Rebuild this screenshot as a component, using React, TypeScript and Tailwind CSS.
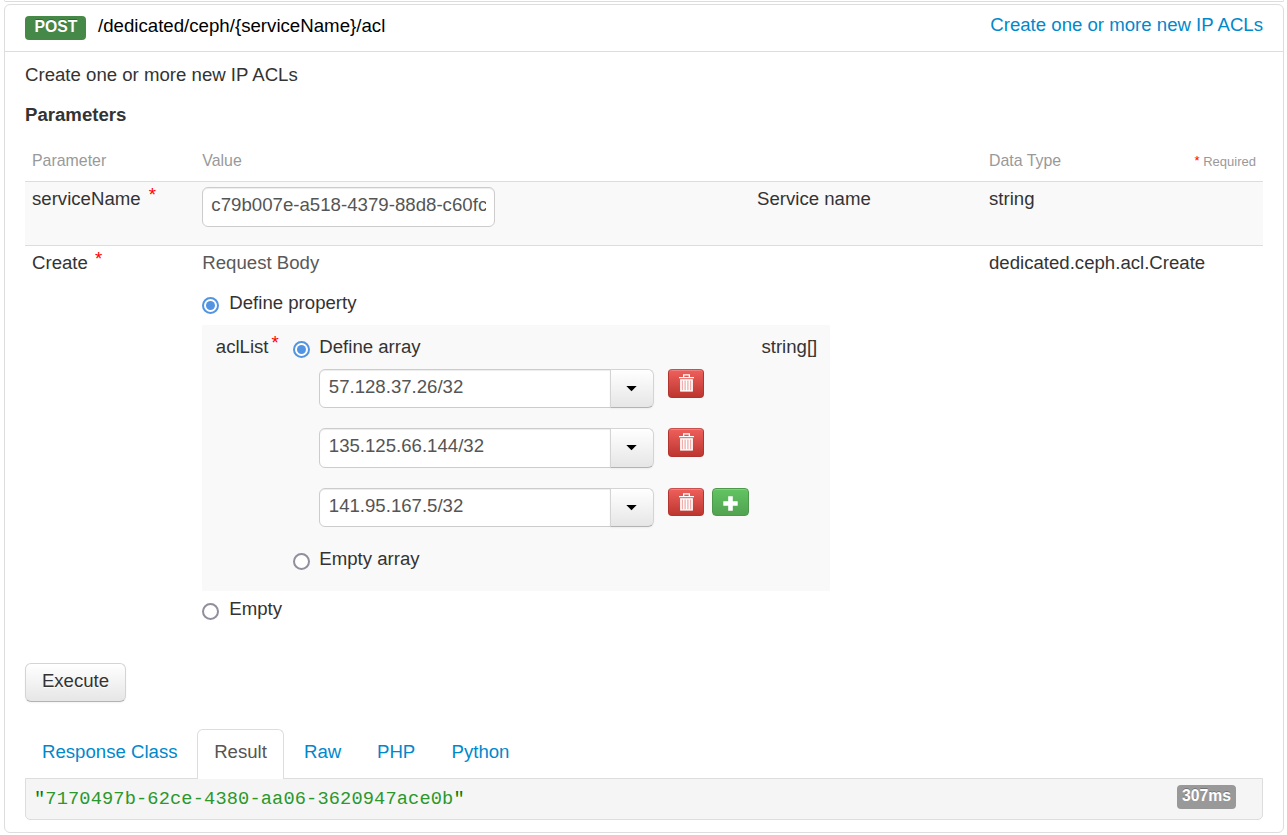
import React from "react";

function Star({ className = "" }: { className?: string }) {
  return <span className={"text-[#f00] " + className}>*</span>;
}

function Radio({ on = false }: { on?: boolean }) {
  return on ? (
    <span className="flex size-[17px] shrink-0 items-center justify-center rounded-full border-2 border-[#5294e2] bg-white">
      <span className="size-[9px] rounded-full bg-[#5294e2]" />
    </span>
  ) : (
    <span className="block size-[17px] shrink-0 rounded-full border-2 border-[#8f8f9d] bg-white" />
  );
}

function Option({ label, on, gap }: { label: string; on?: boolean; gap: string }) {
  return (
    <div className={"flex h-[26px] " + gap}>
      <div className="pt-[7px]">
        <Radio on={on} />
      </div>
      <span>{label}</span>
    </div>
  );
}

function TrashIcon() {
  return (
    <svg width="15" height="18" viewBox="0 0 15 18" className="block">
      <path d="M0 3h15v1.2H0z M4 3V0.2h7V3H9.7V1.5H5.3V3z" fill="#fff" />
      <path d="M1.1 5.2h12.8v12.4H1.1z" fill="#fff" />
      <path d="M3.4 6.4v9.8M6.1 6.4v9.8M8.9 6.4v9.8M11.6 6.4v9.8" stroke="#efaeab" strokeWidth="1.3" />
    </svg>
  );
}

function PlusIcon() {
  return (
    <svg width="15" height="15" viewBox="0 0 15 15" className="block">
      <path d="M5.2 0.3h4.6v4.9h4.9v4.6H9.8v4.9H5.2V9.8H0.3V5.2h4.9z" fill="#fff" />
    </svg>
  );
}

type AclRowProps = { value: string; add?: boolean; height: string; field?: string; action?: string };

function AclRow({ value, add, height, field = "h-[39px]", action = "h-[29px]" }: AclRowProps) {
  return (
    <div className={"flex items-start " + height}>
      <div className={"flex w-[335px] " + field}>
        <div className="h-full w-[292px] rounded-l-[6px] border border-[#ccc] bg-white pl-[8.5px] pt-[4px] text-[#555] shadow-[inset_0_1px_1px_rgba(0,0,0,0.075)]">
          {value}
        </div>
        <button className="-ml-px flex h-full w-[44px] items-center justify-center rounded-r-[6px] border border-[#d4d4d4] border-b-[#b3b3b3] bg-linear-to-b from-white to-[#e6e6e6] pr-px shadow-[inset_0_1px_0_rgba(255,255,255,0.2),0_1px_2px_rgba(0,0,0,0.05)]">
          <svg width="11" height="6" viewBox="0 0 11 6">
            <path d="M0.3 0h10.4L5.5 5.2z" fill="#000" />
          </svg>
        </button>
      </div>
      <button
        className={
          "ml-[14px] flex w-9 justify-center rounded-[4px] border border-[#b3342f] border-t-[#c9504c] bg-linear-to-b from-[#ee5f5b] to-[#bd362f] pt-[4px] pl-px shadow-[inset_0_1px_0_rgba(255,255,255,0.2)] " +
          action
        }
      >
        <TrashIcon />
      </button>
      {add && (
        <button
          className={
            "ml-2 flex w-[37px] justify-center rounded-[4px] border border-[#4c994c] bg-linear-to-b from-[#62c462] to-[#51a351] pt-[6.5px] shadow-[inset_0_1px_0_rgba(255,255,255,0.2)] " +
            action
          }
        >
          <PlusIcon />
        </button>
      )}
    </div>
  );
}

const grid = "grid grid-cols-[170.3px_554.7px_232px_1fr] pl-[7px] pr-[7px]";

export default function App() {
  return (
    <div className="h-[835px] w-[1287px] overflow-hidden bg-white px-1 pr-[3px] font-['Liberation_Sans',Arial,sans-serif] text-[18.62px] leading-[26px] text-[#333]">
      <div className="h-[2px] rounded-b-[5px] border border-t-0 border-[#ddd]" />
      <section className="mt-[2px] h-[829px] rounded-[6px] border border-[#ddd]">
        <header className="flex h-[47px] items-start border-b border-[#ddd] px-5">
          <span className="mt-[11px] h-6 w-[61px] rounded-[4px] bg-[#468847] pl-[9.5px] text-[15.76px] font-bold leading-[21px] text-white [text-shadow:0_-1px_0_rgba(0,0,0,0.25)]">
            POST
          </span>
          <span className="ml-3 mt-[8px] text-[18.67px] text-black">/dedicated/ceph/{"{serviceName}"}/acl</span>
          <a className="ml-auto mt-[7px] text-[#08c]">Create one or more new IP ACLs</a>
        </header>

        <div className="px-5">
          <p className="mt-[10px]">Create one or more new IP ACLs</p>
          <h4 className="mt-[14px] font-bold">Parameters</h4>

          <div className="mt-[14px]">
            <div className={grid + " h-[39px] pt-[6px] text-[15.9px] leading-[26px] text-[#999]"}>
              <span>Parameter</span>
              <span>Value</span>
              <span />
              <span className="flex justify-between">
                Data Type
                <span className="pt-px text-[13px]">
                  <Star className="relative -top-px" />{" "}Required
                </span>
              </span>
            </div>

            <div className={grid + " h-[64px] border-t border-[#ddd] bg-[#f9f9f9] pt-[4px]"}>
              <span>
                serviceName <Star className="relative -top-[4px] ml-[3px]" />
              </span>
              <div className="mt-px h-10 w-[293px] rounded-[6px] border border-[#ccc] bg-white px-2 pt-[4px] text-[18.67px] text-[#555] shadow-[inset_0_1px_1px_rgba(0,0,0,0.075)]">
                <div className="overflow-hidden whitespace-nowrap">c79b007e-a518-4379-88d8-c60fc</div>
              </div>
              <span>Service name</span>
              <span>string</span>
            </div>

            <div className={grid + " h-[418px] border-t border-[#ddd] pt-[4px]"}>
              <span>
                Create <Star className="relative -top-[4px] ml-[2px]" />
              </span>
              <div>
                <div className="text-[#595959]">Request Body</div>
                <div className="mt-[14px]">
                  <Option label="Define property" on gap="gap-[10px]" />
                </div>
                <div className="mt-[9px] flex h-[266px] w-[628px] bg-[#f9f9f9] pl-[13.5px] pr-[13px] pt-[9px]">
                  <div className="w-[77.5px] shrink-0">
                    aclList
                    <Star className="relative -top-[4px] ml-[3px]" />
                  </div>
                  <div className="w-[460px] shrink-0">
                    <Option label="Define array" on gap="gap-[9px]" />
                    <div className="ml-[26px] mt-[9px]">
                      <AclRow value="57.128.37.26/32" height="h-[59px]" />
                      <AclRow value="135.125.66.144/32" height="h-[60px]" field="h-10" />
                      <AclRow value="141.95.167.5/32" height="h-[58px]" action="h-[28px]" add />
                    </div>
                    <Option label="Empty array" gap="gap-[9px]" />
                  </div>
                  <div className="ml-auto">string[]</div>
                </div>
                <div className="mt-[5px]">
                  <Option label="Empty" gap="gap-[10px]" />
                </div>
              </div>
              <span />
              <span>dedicated.ceph.acl.Create</span>
            </div>
          </div>

          <button className="block h-[39px] w-[101px] rounded-[6px] border border-[#d4d4d4] border-b-[#b3b3b3] bg-linear-to-b from-white to-[#e6e6e6] pb-[4px] leading-[26px] shadow-[0_1px_2px_rgba(0,0,0,0.05)] [text-shadow:0_1px_1px_rgba(255,255,255,0.75)]">
            Execute
          </button>

          <nav className="mt-[27px] flex h-[49px] text-[#08c]">
            <a className="w-[172px] pl-[17px] pt-[10px]">Response Class</a>
            <a className="relative z-10 h-[50px] w-[87px] rounded-t-[6px] border border-b-0 border-[#ddd] bg-white pt-[9px] text-center text-[#555]">
              Result
            </a>
            <a className="w-[73px] pl-5 pt-[10px]">Raw</a>
            <a className="w-[74px] pl-5 pt-[10px]">PHP</a>
            <a className="pl-[20.5px] pt-[10px]">Python</a>
          </nav>

          <div className="flex h-[42px] items-start justify-between rounded-b-[5px] border border-[#ddd] bg-[#f5f5f5] pl-2 pr-[26px]">
            <code className="mt-[8px] font-['Liberation_Mono','Courier_New',monospace] text-[18.67px] leading-6 tracking-[0.14px] text-[green]">
              "<span className="text-[#2c972c]">7170497b-62ce-4380-aa06-3620947ace0b</span>"
            </code>
            <span className="mt-[6px] h-6 w-[59px] rounded-[4px] bg-[#999] text-center text-[15.76px] font-bold leading-[21px] text-white [text-shadow:0_-1px_0_rgba(0,0,0,0.25)]">
              307ms
            </span>
          </div>
        </div>
      </section>
    </div>
  );
}
